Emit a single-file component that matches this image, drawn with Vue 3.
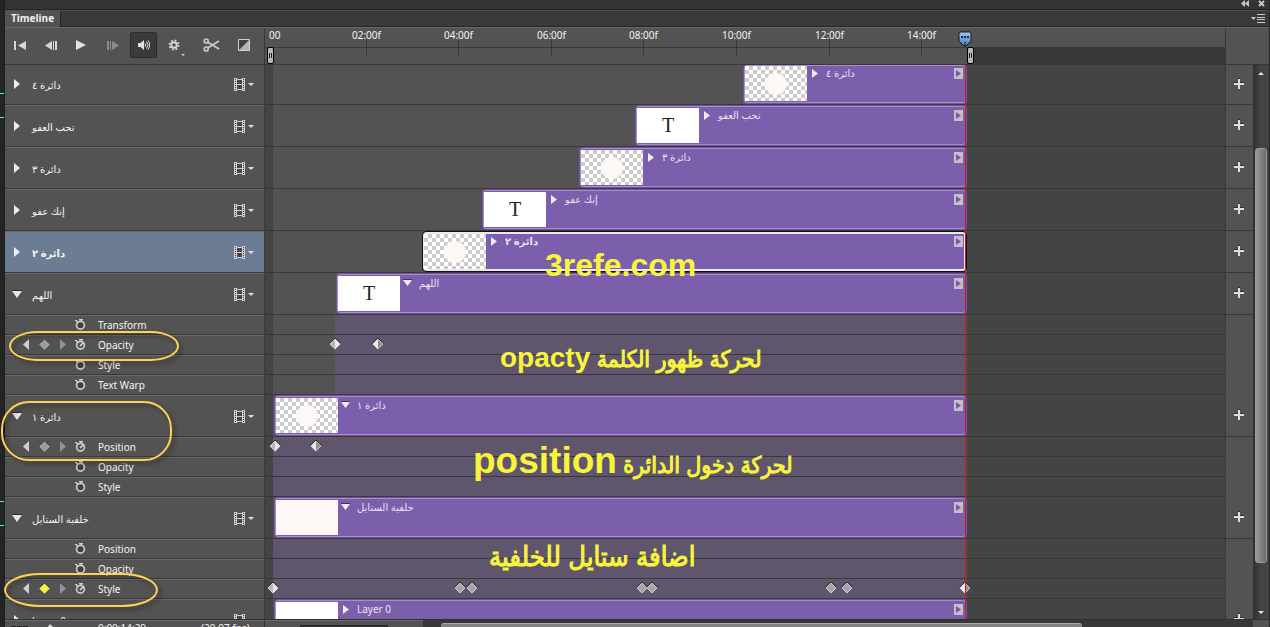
<script setup>
const PX = 46.3
const rulerTimes = [2, 4, 6, 8, 10, 12, 14]
const layers = [
  { name: 'دائرة ٤', start: 743, thumb: 'circle', first: true },
  { name: 'تحب العفو', start: 635, thumb: 'text' },
  { name: 'دائرة ٣', start: 579, thumb: 'circle' },
  { name: 'إنك عفو', start: 482, thumb: 'text' },
  { name: 'دائرة ٢', start: 422, thumb: 'circle', selected: true },
  {
    name: 'اللهم', start: 336, thumb: 'text', open: true,
    props: [
      { name: 'Transform' },
      { name: 'Opacity', active: true, keys: [{ x: 335, t: 'l' }, { x: 378, t: 'r' }] },
      { name: 'Style' },
      { name: 'Text Warp' },
    ],
  },
  {
    name: 'دائرة ١', start: 274, thumb: 'circle', open: true,
    props: [
      { name: 'Position', active: true, keys: [{ x: 275, t: 'l' }, { x: 316, t: 'r' }] },
      { name: 'Opacity' },
      { name: 'Style' },
    ],
  },
  {
    name: 'خلفية الستايل', start: 274, thumb: 'plain', open: true,
    props: [
      { name: 'Position' },
      { name: 'Opacity' },
      {
        name: 'Style', active: true, current: true,
        keys: [
          { x: 273, t: 'l' }, { x: 460, t: 'm' }, { x: 472, t: 'm' }, { x: 642, t: 'm' },
          { x: 652, t: 'm' }, { x: 831, t: 'm' }, { x: 847, t: 'm' }, { x: 965, t: 'r' },
        ],
      },
    ],
  },
  { name: 'Layer 0', start: 274, thumb: 'white' },
]
const LANE = 265
const END = 967
const clipStyle = (l) => ({ marginLeft: l.start - LANE + 'px', width: END - l.start + 'px' })
const tintStyle = (l) => ({ marginLeft: l.start - LANE - 1 + 'px', width: END - l.start + 'px' })
const keyStyle = (k) => ({ left: k.x - LANE - 6 + 'px' })
const tickStyle = (t) => ({ left: Math.round(8 + t * PX) + 'px' })
const label = (t) => String(t).padStart(2, '0') + ':00f'
const fills = {
  l: ['#b4b4b4', '#eaeaea'],
  r: ['#eaeaea', '#8c8c8c'],
  m: ['#a3a3a8', '#a3a3a8'],
}
</script>

<template>
  <main class="app">
    <div class="edge"><i class="m1"></i><i class="m2"></i><i class="m3"></i><i class="m4"></i></div>
    <section class="panel">
      <div class="topbar">
        <button class="bare" aria-label="Collapse">
          <svg width="8" height="7" viewBox="0 0 8 7"><path d="M4 0v7L0 3.5zM8 0v7L4 3.5z" fill="#c8c8c8" /></svg>
        </button>
        <button class="bare" aria-label="Close">
          <svg width="7" height="7" viewBox="0 0 7 7"><path d="M1 1l5 5M6 1L1 6" stroke="#c8c8c8" stroke-width="2" /></svg>
        </button>
      </div>
      <div class="tabs">
        <button class="tab">Timeline</button>
        <button class="bare menu" aria-label="Panel menu">
          <svg width="14" height="9" viewBox="0 0 14 9"><path d="M0 3h5L2.5 6z" fill="#c8c8c8" /><path d="M6 .5h8M6 3.5h8M6 5.5h8M6 8.5h8" stroke="#c8c8c8" /></svg>
        </button>
      </div>

      <div class="head">
        <div class="tools">
          <button class="bare" aria-label="First frame">
            <svg width="12" height="9" viewBox="0 0 12 9"><path d="M0 0h2v9H0zM12 0v9L4 4.5z" fill="#d6d6d6" /></svg>
          </button>
          <button class="bare" aria-label="Previous frame">
            <svg width="12" height="9" viewBox="0 0 12 9"><path d="M7 0v9L0 4.5zM8 0h1v9H8zM10 0h2v9h-2z" fill="#d6d6d6" /></svg>
          </button>
          <button class="bare" aria-label="Play">
            <svg width="10" height="10" viewBox="0 0 10 10"><path d="M0 0v10L10 5z" fill="#e2e2e2" /></svg>
          </button>
          <button class="bare next" aria-label="Next frame">
            <svg width="12" height="9" viewBox="0 0 12 9"><path d="M5 0v9l7-4.500zM0 0h2v9H0zM3 0h1v9H3z" fill="#8c8c8c" /></svg>
          </button>
          <button class="bare sound" aria-label="Mute audio">
            <svg width="12" height="12" viewBox="0 0 12 12"><path d="M0 4h2.500L6 1v10L2.500 8H0z" fill="#dedede" /><path d="M7 4.200q1.500 1.800 0 3.600M8.500 2.500q3 3.500 0 7M10 1.500q3.400 4.500 0 9" fill="none" stroke="#dedede" /></svg>
          </button>
          <button class="bare gear" aria-label="Playback options">
            <svg width="18" height="18" viewBox="0 0 18 18">
              <circle cx="6" cy="9" r="2.800" fill="none" stroke="#d6d6d6" stroke-width="2" />
              <circle cx="6" cy="9" r="4.600" fill="none" stroke="#d6d6d6" stroke-width="1.800" stroke-dasharray="1.810 1.810" />
              <path d="M13 18h4l-2 2z" fill="#d6d6d6" />
            </svg>
          </button>
          <span class="sep"></span>
          <button class="bare scissors" aria-label="Split at playhead">
            <svg width="17" height="14" viewBox="0 0 17 14"><g fill="none" stroke="#c8c8c8" stroke-width="1.700"><circle cx="3.200" cy="3" r="2" /><circle cx="3.200" cy="11" r="2" /><path d="M5 4.200L16 11M5 9.800L16 3" stroke-width="1.900" /></g></svg>
          </button>
          <button class="bare" aria-label="Transition">
            <svg width="12" height="12" viewBox="0 0 12 12"><path d="M.5.5h11v11H.5z" fill="#404040" stroke="#d0d0d0" /><path d="M11 1v10H1z" fill="#b4b4b4" /></svg>
          </button>
        </div>
        <div class="ruler">
          <span class="zero">00</span>
          <div v-for="t in rulerTimes" :key="t" class="tick" :style="tickStyle(t)"><span>{{ label(t) }}</span></div>
          <div class="after"></div>
          <i class="grip g1"></i><i class="grip g2"></i>
          <svg class="playhead" width="14" height="16" viewBox="0 0 14 16">
            <defs><linearGradient id="ph" x2="0" y2="1"><stop stop-color="#a4c6ec" /><stop offset="1" stop-color="#3f7cc4" /></linearGradient></defs>
            <path d="M2 1h10l1 1v8l-5 5H6l-5-5V2z" fill="url(#ph)" stroke="#181818" /><path d="M3 5h2v2H3zM6 5h2v2H6zM9 5h2v2H9z" fill="#1e2c3e" /><path d="M7 11v4" stroke="#181818" />
          </svg>
        </div>
        <div class="corner"></div>
      </div>

      <div class="body">
        <div class="rows">
          <template v-for="l in layers" :key="l.name">
            <div class="row" :class="{ first: l.first, selected: l.selected }">
              <div class="side">
                <button class="bare twirl" :aria-label="'Toggle ' + l.name">
                  <svg v-if="l.open" width="10" height="8" viewBox="0 0 10 8"><path d="M0 0h10v1H0z" fill="#303030" /><path d="M0 1h10L5 8z" fill="#e8e8e8" /></svg>
                  <svg v-else width="10" height="12" viewBox="0 0 10 12"><path d="M2 1v10l6-5z" fill="#ededed" /></svg>
                </button>
                <span class="name">{{ l.name }}</span>
                <button class="bare film" aria-label="Track options">
                  <svg width="20" height="13" viewBox="0 0 20 13">
                    <path d="M0 0h3v13H0zM8 0h3v13H8zM3 1h5v1H3zM3 6h5v1H3zM3 11h5v1H3z" fill="#d0d0d0" /><path d="M3 2h5v4H3zM3 7h5v4H3z" fill="#484848" />
                    <path d="M1.500 1v12M9.500 1v12" stroke="#3c3c3c" stroke-dasharray="1 1" /><path d="M14 5h6l-3 3z" fill="#e0e0e0" />
                  </svg>
                </button>
              </div>
              <div class="lane">
                <div class="clip" :style="clipStyle(l)">
                  <div class="thumb" :class="l.thumb">
                    <i v-if="l.thumb === 'circle'"></i><template v-if="l.thumb === 'text'">T</template>
                  </div>
                  <svg v-if="l.open" class="ctw" width="9" height="7" viewBox="0 0 9 7"><path d="M0 0h9v1H0z" fill="#432f60" /><path d="M0 1h9L4.500 7z" fill="#ececec" /></svg>
                  <svg v-else class="ctw" width="9" height="9" viewBox="0 0 9 9"><path d="M2 0v9l6-4.500z" fill="#ececec" /></svg>
                  <span class="cname">{{ l.name }}</span>
                  <svg class="ce" width="9" height="11" viewBox="0 0 9 11"><path d="M0 0h9v11H0z" fill="#c4c0c8" /><path d="M2 2v7l5-3.500z" fill="#7a5aa8" /></svg>
                </div>
              </div>
              <div class="add"><button class="bare" aria-label="Add media"><svg width="10" height="11" viewBox="0 0 10 11"><path d="M0 4.500h4M6 4.500h4M4 .5h2" stroke="#303030" /><path d="M0 6h10M5 1v10" stroke="#dedede" stroke-width="2" /></svg></button></div>
            </div>
            <div v-for="p in l.props || []" :key="l.name + p.name" class="row prop">
              <div class="side">
                <div class="nav">
                  <template v-if="p.active">
                    <button class="bare" aria-label="Previous keyframe"><svg width="6" height="11" viewBox="0 0 6 11"><path d="M6 0v11L0 5.500z" fill="#d0d0d0" /></svg></button>
                    <button class="bare" aria-label="Keyframe"><svg width="11" height="11" viewBox="0 0 11 11"><path d="M5.500.7l4.800 4.800-4.800 4.800L.7 5.500z" :fill="p.current ? '#fbf24a' : '#9c9c9c'" :stroke="p.current ? '#fbf24a' : '#c0c0c0'" stroke-width=".8" /><path d="M0 5L5.500 0 11 5" fill="none" stroke="#383838" stroke-width=".8" /></svg></button>
                    <button class="bare" aria-label="Next keyframe"><svg width="6" height="11" viewBox="0 0 6 11"><path d="M0 0v11l6-5.500z" fill="#929292" /></svg></button>
                  </template>
                </div>
                <button class="bare watch" :aria-label="'Animate ' + p.name">
                  <svg width="11" height="12" viewBox="0 0 11 12"><path d="M4 .5h4" stroke="#303030" /><path d="M4 1.500h4M6 1v2" stroke="#d0d0d0" stroke-width="1.400" /><path d="M0 2h2v1h1v2H2V4H1V3H0z" fill="#d0d0d0" /><circle cx="5.500" cy="7.200" r="3.900" :fill="p.active ? '#555' : '#404040'" stroke="#cacaca" stroke-width="1.700" /><path v-if="p.active" d="M5 8l3-3" stroke="#e0e0e0" stroke-width="1.500" /></svg>
                </button>
                <span class="pname">{{ p.name }}</span>
              </div>
              <div class="lane">
                <div class="tint" :style="tintStyle(l)"></div>
                <svg v-for="k in p.keys || []" :key="k.x" class="key" :style="keyStyle(k)" width="12" height="12" viewBox="0 0 12 12">
                  <path d="M6 .5L.5 6 6 11.500z" :fill="fills[k.t][0]" /><path d="M6 .5L11.500 6 6 11.500z" :fill="fills[k.t][1]" /><path d="M6 1.200L10.800 6 6 10.800 1.200 6z" fill="none" stroke="#e0e0e0" stroke-width=".8" /><path d="M.3 5.500L6 0l5.700 5.500" fill="none" stroke="#303030" />
                </svg>
              </div>
              <div class="add"></div>
            </div>
          </template>
          <div class="redline"></div>
        </div>
        <div class="vscroll">
          <svg width="6" height="3" viewBox="0 0 6 3"><path d="M0 3h6L3 0z" fill="#e0e0e0" /></svg>
          <div class="vthumb"></div>
          <svg class="down" width="6" height="3" viewBox="0 0 6 3"><path d="M0 0h6L3 3z" fill="#e0e0e0" /></svg>
        </div>
      </div>

      <div class="foot">
        <div class="finfo">
          <span class="bars"><i></i><i></i><i></i></span>
          <svg class="arrow" width="7" height="5" viewBox="0 0 7 5"><path d="M3 0l4 4H0z" fill="#ddd" /></svg>
          <span class="time">0:00:14:29</span><span class="fps">(29.97 fps)</span>
        </div>
        <div class="fzoom"><i></i></div>
        <div class="hscroll"><div class="hthumb"></div></div>
        <div class="fend"></div>
      </div>
    </section>

    <div class="ring r1"></div><div class="ring r2"></div><div class="ring r3"></div>
    <div class="note n0">3refe.com</div>
    <div class="note ar n1" dir="rtl">لحركة ظهور الكلمة <span>opacty</span></div>
    <div class="note ar n2" dir="rtl">لحركة دخول الدائرة <span>position</span></div>
    <div class="note ar n3" dir="rtl">اضافة ستايل للخلفية</div>
  </main>
</template>

<style>
body { margin: 0; background: #262626; overflow: hidden; }
</style>

<style scoped>
* { box-sizing: border-box; }
svg { display: block; flex: none; }
.app { position: relative; height: 100vh; display: flex; overflow: hidden; font: 10px/14px "Noto Sans", "DejaVu Sans", sans-serif; color: #f4f4f4; }
.edge { position: relative; width: 5px; flex: none; background: #242424; border-right: 1px solid #1e1e1e; }
.edge i { position: absolute; left: 0; width: 4px; height: 1px; background: #4fe8e8; }
.m1 { top: 93px; } .m2 { top: 117px; } .m3 { top: 501px; } .m4 { top: 525px; }
.panel { flex: 1; min-width: 0; display: flex; flex-direction: column; border-right: 1px solid #262626; background: #535353; }
.bare { padding: 0; border: 0; background: none; display: flex; align-items: center; justify-content: center; }
.topbar { height: 10px; flex: none; display: flex; justify-content: flex-end; gap: 9px; padding: 0 4px 2px 0; background: #343434; border-bottom: 1px solid #242424; }
.tabs { height: 17px; flex: none; display: flex; justify-content: space-between; background: #3a3a3a; border-top: 1px solid #505050; border-bottom: 1px solid #262626; }
.tab { height: 17px; width: 56px; padding: 0 0 2px; border: 0; border-right: 1px solid #262626; background: #535353; color: #f0f0f0; font: bold 10px/15px "Open Sans", "Noto Sans", sans-serif; }
.menu { margin-right: 4px; }
.head { height: 38px; flex: none; display: flex; border-top: 1px solid #686868; border-bottom: 1px solid #383838; }
.tools { width: 260px; flex: none; display: flex; align-items: center; border-right: 1px solid #383838; padding: 0 0 2px 9px; }
.tools .bare { width: 31px; height: 24px; flex: none; justify-content: flex-start; }
.tools .next { width: 23px; }
.tools .sound { width: 27px; height: 26px; justify-content: center; background: #3a3a3a; border: 1px solid #2c2c2c; border-radius: 2px; margin-right: 11px; }
.tools .gear { width: 25px; }
.gear svg { overflow: visible; }
.sep { width: 1px; height: 32px; background: #3a3a3a; margin-right: 10px; }
.tools .scissors { width: 35px; }
.ruler { flex: 1; position: relative; background: linear-gradient(#383838, #383838) 0 19px / 100% 1px no-repeat; }
.zero { position: absolute; left: 4px; top: 0; }
.tick { position: absolute; top: 12px; width: 1px; height: 15px; background: #383838; }
.tick span { position: absolute; top: -12px; left: -14px; white-space: nowrap; }
.after { position: absolute; left: 702px; right: 0; top: 19px; bottom: 0; background: #383838; }
.grip { position: absolute; top: 19px; width: 7px; height: 17px; border: 1px solid #000; border-radius: 2px; background: linear-gradient(90deg, #222 1px, transparent 1px 2px, #222 2px) 1px 5px / 3px 5px no-repeat, #b8b8b8; }
.g1 { left: 2px; } .g2 { left: 702px; }
.playhead { position: absolute; left: 693px; top: 3px; z-index: 3; }
.corner { width: 44px; flex: none; border-left: 1px solid #383838; }
.body { flex: 1; min-height: 0; display: flex; overflow: hidden; }
.rows { flex: 1; min-width: 0; position: relative; }
.row { height: 42px; display: flex; }
.row > div { border-bottom: 1px solid #383838; }
.first { height: 40px; }
.side { width: 260px; flex: none; display: flex; align-items: center; border-top: 1px solid #686868; border-right: 1px solid #383838; padding-left: 6px; }
.first .side { border-top-color: #535353; padding-bottom: 2px; }
.selected .side { background: #6c7d93; }
.twirl { width: 12px; margin-right: 9px; }
.name { flex: 1; padding-top: 2px; font-size: 10px; line-height: 20px; }
.film { margin-right: 10px; }
.selected .name, .selected .cname { font-weight: bold; }
.lane { flex: 1; min-width: 0; position: relative; overflow: hidden; background: linear-gradient(90deg, #444 8px, #535353 8px 702px, #444 702px); }
.clip { height: 41px; display: flex; align-items: flex-start; border: 1px solid #7253a0; border-radius: 4px; background: #7c5fac; box-shadow: inset 0 0 0 1px #a78dcc; padding: 2px 1px; }
.first .clip { height: 39px; border-top: 0; padding-top: 1px; }
.selected .clip { border-color: #111; box-shadow: inset 0 0 0 2px #ece8f2; }
.thumb { width: 62px; height: 35px; flex: none; background: #fff; color: #222; text-align: center; font: 20px/35px "Liberation Serif", serif; }
.circle { display: flex; align-items: center; justify-content: center; background: repeating-conic-gradient(#ccc 0 25%, #fff 0 50%) 0 0 / 8px 8px; }
.circle i { width: 22px; height: 22px; border-radius: 50%; background: #fdf8f6; }
.plain { background: #fdf8f6; }
.ctw { margin: 3px 7px 0 3px; }
.cname { flex: 1; color: #e8e2f0; line-height: 14px; }
.ce { margin: 2px 2px 0 0; }
.tint { height: 100%; background: #5f556d; }
.add { width: 28px; flex: none; border-left: 1px solid #383838; display: flex; align-items: center; justify-content: center; padding: 0 2px 3px 0; }
.prop { height: 20px; }
.prop .add { border-bottom-color: transparent; }
.nav { width: 64px; padding-left: 12px; display: flex; align-items: center; gap: 10px; }
.watch { margin-right: 12px; }
.nav .bare, .watch { padding-bottom: 2px; }
.pname { line-height: 20px; }
.key { position: absolute; top: 3px; }
.redline { position: absolute; top: 0; bottom: 0; left: 960px; width: 1px; background: #d01818; z-index: 2; }
.vscroll { width: 16px; flex: none; display: flex; flex-direction: column; align-items: center; background: linear-gradient(90deg, #303030, #444 8px); padding: 7px 0 5px; }
.vthumb { width: 12px; height: 415px; margin-top: 73px; border-radius: 3px; border: 1px solid #999; background: linear-gradient(90deg, #999, #6c6c6c); }
.down { margin-top: auto; }
.foot { height: 8px; flex: none; display: flex; overflow: hidden; border-top: 1px solid #303030; }
.finfo { width: 260px; flex: none; display: flex; border-top: 1px solid #6a6a6a; border-right: 1px solid #303030; padding-left: 6px; }
.bars { display: flex; gap: 1px; padding-top: 5px; }
.bars i { width: 5px; height: 3px; background: #222; }
.arrow { margin: 3px 0 0 19px; }
.time { margin-left: 44px; white-space: nowrap; }
.fps { margin-left: 55px; white-space: nowrap; }
.fzoom { width: 158px; flex: none; border-top: 1px solid #6a6a6a; padding: 4px 0 0 35px; }
.fzoom i { display: block; width: 88px; height: 4px; background: #333; border-top: 1px solid #222; }
.hscroll { flex: 1; background: #383838; padding: 3px 0 0 18px; }
.hthumb { width: 641px; height: 8px; border-radius: 3px; background: #828282; border-top: 1px solid #aaa; }
.fend { width: 16px; flex: none; }
.ring { position: absolute; border: 2px solid #fcd254; z-index: 4; filter: drop-shadow(3px 3px 2px rgba(0, 0, 0, .4)); }
.r1 { left: 9px; top: 331px; width: 170px; height: 30px; border-radius: 28px / 15px; }
.r2 { left: 1px; top: 401px; width: 171px; height: 60px; border-radius: 28px; }
.r3 { left: 4px; top: 573px; width: 154px; height: 34px; border-radius: 36px / 17px; }
.note { position: absolute; z-index: 5; color: #f8f43c; font: bold 32px/40px "Liberation Sans", "DejaVu Sans Condensed", "DejaVu Sans", sans-serif; white-space: nowrap; }
.ar { font-size: 23px; font-weight: 400; -webkit-text-stroke: 1px #f8f43c; }
.ar span { font-weight: bold; -webkit-text-stroke: 0; }
.n0 { left: 545px; top: 245px; }
.n1 { left: 500px; top: 338px; }
.n1 span { font-size: 28px; }
.n2 { left: 473px; top: 441px; }
.n2 span { font-size: 37px; }
.n3 { left: 489px; top: 537px; font-size: 27px; }
</style>
